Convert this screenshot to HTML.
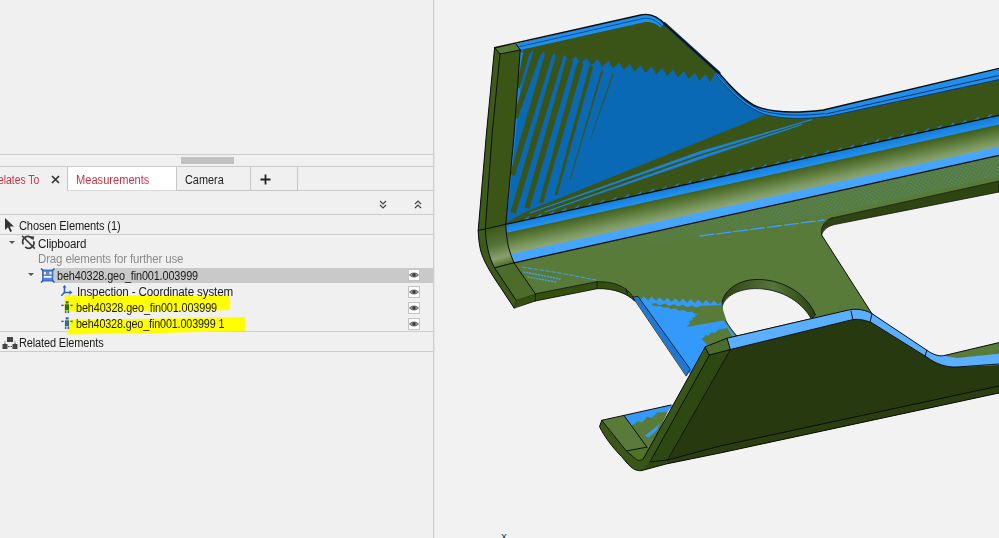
<!DOCTYPE html>
<html>
<head>
<meta charset="utf-8">
<title>Inspection</title>
<style>
html,body{margin:0;padding:0;}
body{width:999px;height:538px;overflow:hidden;background:#f0f0f0;position:relative;font-family:"Liberation Sans",sans-serif;font-size:12px;color:#1a1a1a;}
.abs{position:absolute;}
.hl{position:absolute;left:0;height:1px;background:#cbcbcb;}
.t{position:absolute;white-space:nowrap;line-height:16px;height:16px;font-size:12px;letter-spacing:-0.15px;}
.tab{position:absolute;top:167px;height:24px;line-height:24px;white-space:nowrap;font-size:12px;}
.eye{position:absolute;left:408px;width:10px;height:10px;background:#fff;border:1px solid #c4c4c4;}
.tl{position:absolute;top:1px;display:inline-block;transform-origin:0 50%;}
.eye svg{position:absolute;left:0;top:0;}
.t span{display:inline-block;transform-origin:0 50%;}
.tri{position:absolute;width:0;height:0;border-left:3px solid transparent;border-right:3px solid transparent;border-top:3px solid #555;}
</style>
</head>
<body>
<!-- left panel -->
<div class="abs" id="panel" style="left:0;top:0;width:433px;height:538px;background:#f0f0f0;"></div>
<div class="abs" style="left:433px;top:0;width:1px;height:538px;background:#cecece;"></div><div class="abs" style="left:434px;top:0;width:1px;height:538px;background:#e6e6e6;z-index:2;"></div>
<div class="hl" style="top:154px;width:433px;"></div>
<div class="abs" style="left:181px;top:157px;width:53px;height:7px;background:#c2c2c2;"></div>
<div class="hl" style="top:166px;width:433px;"></div>

<!-- tabs -->
<div class="tab" style="left:0;width:67px;color:#c0394a;"><span class="tl" style="left:-2px;transform:scaleX(0.864)">elates To</span><svg style="position:absolute;left:51px;top:8px;" width="9" height="9" viewBox="0 0 9 9"><path d="M1 1 L8 8 M8 1 L1 8" stroke="#333" stroke-width="1.7" fill="none"/></svg></div>
<div class="tab" style="left:67px;width:109px;background:#fff;border-left:1px solid #c6c6c6;border-bottom:1px solid #d8d8d8;box-sizing:border-box;color:#c0394a;"><span class="tl" style="left:8px;transform:scaleX(0.925)">Measurements</span></div>
<div class="tab" style="left:176px;width:75px;border-left:1px solid #c6c6c6;border-right:1px solid #c6c6c6;border-bottom:1px solid #c6c6c6;box-sizing:border-box;color:#222;"><span class="tl" style="left:8px;transform:scaleX(0.9066)">Camera</span></div>
<div class="tab" style="left:251px;width:47px;border-right:1px solid #c6c6c6;border-bottom:1px solid #c6c6c6;box-sizing:border-box;color:#222;"><svg style="position:absolute;left:9px;top:7px;" width="11" height="11" viewBox="0 0 11 11"><path d="M5.5 0.5 V10.5 M0.5 5.5 H10.5" stroke="#222" stroke-width="1.8" fill="none"/></svg></div>
<div class="hl" style="top:190px;left:298px;width:135px;"></div>

<!-- chevrons -->
<svg class="abs" style="left:377px;top:199px;" width="50" height="12" viewBox="0 0 50 12">
<g fill="none" stroke="#444" stroke-width="1.2">
<path d="M3 2 L6 5 L9 2 M3 6 L6 9 L9 6"/>
<path d="M38 5 L41 2 L44 5 M38 9 L41 6 L44 9"/>
</g>
</svg>
<div class="hl" style="top:214px;width:433px;"></div>

<!-- Chosen elements -->
<svg class="abs" style="left:4px;top:218px;" width="12" height="16" viewBox="0 0 12 16"><path d="M1 0 L1 12 L4 9.3 L6.2 14 L8 13.2 L5.8 8.6 L10 8.4 Z" fill="#333"/></svg>
<div class="t" style="left:19px;top:218px;"><span style="transform:scaleX(0.9238)">Chosen Elements (1)</span></div>
<div class="hl" style="top:234px;width:433px;"></div>

<!-- Clipboard -->
<div class="tri" style="left:9px;top:241px;"></div>
<svg class="abs" style="left:21px;top:235px;" width="15" height="16" viewBox="0 0 15 16">
<g fill="none" stroke="#3a3a3a" stroke-width="1.7" stroke-linecap="butt">
<path d="M2.4 9.4 A5.2 5.2 0 0 1 11.3 3.9"/>
<path d="M12.6 6.2 A5.2 5.2 0 0 1 4.2 11.8"/>
<path d="M1 0.8 L13.8 13.6" stroke-width="1.5"/>
</g>
<path d="M9.2 1.2 L13.2 1.6 L12.4 5.6 Z" fill="#3a3a3a"/>
</svg>
<div class="t" style="left:38px;top:236px;"><span style="transform:scaleX(0.9637)">Clipboard</span></div>
<div class="t" style="left:38px;top:251px;color:#8a8a8a;"><span style="transform:scaleX(0.9576)">Drag elements for further use</span></div>

<!-- highlighted rows -->
<div class="hl" style="top:331px;width:433px;"></div>
<svg class="abs" style="left:55px;top:290px;" width="200" height="50" viewBox="55 290 200 50">
<path d="M64.6,295 L229,295.8 L230.5,303 L229.5,310.2 L64.6,311.6 Z" fill="#ffff00"/>
<path d="M67.4,320 L160,318.5 L245,317 L245.6,324 L245.2,331 L160,333 L67.4,334.4 Z" fill="#ffff00"/>
</svg>
<!-- selected row -->
<div class="abs" style="left:54px;top:268px;width:379px;height:15px;background:#c9c9c9;"></div>
<div class="tri" style="left:28px;top:273px;"></div>
<svg class="abs" style="left:40px;top:268px;" width="15" height="15" viewBox="0 0 15 15">
<rect x="2" y="1.5" width="11.5" height="12" fill="#3f6fc6"/>
<rect x="3.6" y="3.2" width="8.3" height="8.6" fill="#5a86d6"/>
<rect x="3.8" y="3.8" width="2.2" height="2.6" fill="#f4f7fc"/><rect x="9.4" y="3.8" width="2.2" height="2.6" fill="#f4f7fc"/>
<rect x="3.8" y="8" width="7.8" height="1.8" fill="#f4f7fc"/>
<path d="M1 0.5 L3 2.5 M14.5 0.5 L12.5 2.5 M1 14.5 L3 12.5 M14.5 14.5 L12.5 12.5" stroke="#2c55a8" stroke-width="1.5"/>
</svg>
<div class="t" style="left:57px;top:268px;"><span style="transform:scaleX(0.906)">beh40328.geo_fin001.003999</span></div>
<div class="eye" style="top:269px;"><svg width="10" height="10" viewBox="0 0 10 10"><path d="M0.6 5 C2.2 2.4 7.8 2.4 9.4 5 C7.8 7.6 2.2 7.6 0.6 5 Z" fill="#9a9a9a" stroke="#555" stroke-width="0.9"/><circle cx="5" cy="5" r="1.7" fill="#3a3a3a"/></svg></div>

<!-- Inspection row -->
<svg class="abs" style="left:60px;top:284.5px;" width="13" height="12" viewBox="0 0 13 12">
<g fill="none" stroke="#2f5fc0" stroke-width="1.6">
<path d="M4.5 1 L4.5 7.5 L11 7.5"/>
<path d="M4.5 7.5 L1.3 10.7"/>
</g>
<path d="M9.5 5.3 L12.5 7.5 L9.5 9.7 Z" fill="#2f5fc0"/>
<path d="M2.6 2.6 L4.5 0 L6.4 2.6 Z" fill="#2f5fc0"/>
</svg>
<div class="t" style="left:77px;top:284px;"><span style="transform:scaleX(0.97)">Inspection - Coordinate system</span></div>
<div class="eye" style="top:286px;"><svg width="10" height="10" viewBox="0 0 10 10"><path d="M0.6 5 C2.2 2.4 7.8 2.4 9.4 5 C7.8 7.6 2.2 7.6 0.6 5 Z" fill="#9a9a9a" stroke="#555" stroke-width="0.9"/><circle cx="5" cy="5" r="1.7" fill="#3a3a3a"/></svg></div>


<svg class="abs" style="left:60px;top:300px;" width="14" height="14" viewBox="0 0 14 14">
<rect x="5.7" y="1.2" width="2.9" height="2.3" fill="#2f6b1e"/>
<rect x="4.9" y="4.3" width="4.1" height="5.8" fill="#2f6b1e"/>
<rect x="1.3" y="4.7" width="2.4" height="1.4" fill="#2f5fc0"/><rect x="10.3" y="4.7" width="2.4" height="1.4" fill="#2f5fc0"/>
<rect x="4.9" y="10.5" width="1.5" height="2.6" fill="#2f5fc0"/><rect x="7.6" y="10.5" width="1.5" height="2.6" fill="#2f5fc0"/>
</svg>
<div class="t" style="left:76px;top:300px;"><span style="transform:scaleX(0.906)">beh40328.geo_fin001.003999</span></div>
<div class="eye" style="top:302px;"><svg width="10" height="10" viewBox="0 0 10 10"><path d="M0.6 5 C2.2 2.4 7.8 2.4 9.4 5 C7.8 7.6 2.2 7.6 0.6 5 Z" fill="#9a9a9a" stroke="#555" stroke-width="0.9"/><circle cx="5" cy="5" r="1.7" fill="#3a3a3a"/></svg></div>
<svg class="abs" style="left:60px;top:316px;" width="14" height="14" viewBox="0 0 14 14">
<rect x="5.7" y="1.2" width="2.9" height="2.3" fill="#2f5fc0"/>
<rect x="4.9" y="4.3" width="4.1" height="5.8" fill="#356a8a"/>
<rect x="1.3" y="4.7" width="2.4" height="1.4" fill="#2f5fc0"/><rect x="10.3" y="4.7" width="2.4" height="1.4" fill="#2f5fc0"/>
<rect x="4.9" y="10.5" width="1.5" height="2.6" fill="#2f5fc0"/><rect x="7.6" y="10.5" width="1.5" height="2.6" fill="#2f5fc0"/>
</svg>
<div class="t" style="left:76px;top:316px;"><span style="transform:scaleX(0.897)">beh40328.geo_fin001.003999 1</span></div>
<div class="eye" style="top:318px;"><svg width="10" height="10" viewBox="0 0 10 10"><path d="M0.6 5 C2.2 2.4 7.8 2.4 9.4 5 C7.8 7.6 2.2 7.6 0.6 5 Z" fill="#9a9a9a" stroke="#555" stroke-width="0.9"/><circle cx="5" cy="5" r="1.7" fill="#3a3a3a"/></svg></div>


<!-- Related elements -->
<svg class="abs" style="left:1.5px;top:335.5px;" width="16" height="14" viewBox="0 0 16 14">
<rect x="5" y="1" width="6" height="5" fill="#444"/>
<rect x="0.5" y="8" width="5" height="5" fill="#444"/>
<rect x="10.5" y="8" width="5" height="5" fill="#444"/>
<path d="M3 8 L3 5 M13 8 L13 5 M6 10.5 L10 10.5" stroke="#444" stroke-width="1" stroke-dasharray="1.5 1"/>
</svg>
<div class="t" style="left:19px;top:335px;"><span style="transform:scaleX(0.916)">Related Elements</span></div>
<div class="hl" style="top:351px;width:433px;"></div>

<!-- viewport -->
<div class="abs" style="left:434px;top:0;width:565px;height:538px;background:#f2f2f2;"></div>
<div class="abs" style="left:501px;top:533px;font-size:9px;line-height:9px;color:#222;">X</div>
<svg id="model" class="abs" style="left:434px;top:0;" width="565" height="538" viewBox="434 0 565 538">
<defs>
<linearGradient id="gBend" gradientUnits="userSpaceOnUse" x1="752" y1="169.9" x2="760.4" y2="208.5">
<stop offset="0" stop-color="#3e5a1c"/>
<stop offset="0.24" stop-color="#44621f"/>
<stop offset="0.45" stop-color="#5f7e3f"/>
<stop offset="0.62" stop-color="#7a9660"/>
<stop offset="0.76" stop-color="#8aa472"/>
<stop offset="1" stop-color="#7f9c64"/>
</linearGradient>
<linearGradient id="gB1" gradientUnits="userSpaceOnUse" x1="752" y1="169.9" x2="754.2" y2="180">
<stop offset="0" stop-color="#0f7fda"/>
<stop offset="1" stop-color="#2a93f4"/>
</linearGradient>
<clipPath id="cBend"><path d="M505.8,224.3 L999,115.4 L999,155.3 L514,262.8 C512,258 510,253 508.5,247 C507,240 506,233 505.8,224.3 Z"/></clipPath>
<pattern id="pDots" width="4.2" height="4.2" patternUnits="userSpaceOnUse" patternTransform="rotate(-12.5)">
<rect x="0.5" y="0.5" width="1.5" height="1.1" fill="#4aa3f5"/>
<rect x="2.6" y="2.6" width="1.5" height="1.1" fill="#4aa3f5"/>
</pattern>
<linearGradient id="gFade" gradientUnits="userSpaceOnUse" x1="560" y1="0" x2="999" y2="0">
<stop offset="0" stop-color="#fff" stop-opacity="0"/>
<stop offset="0.5" stop-color="#fff" stop-opacity="0.7"/>
<stop offset="1" stop-color="#fff" stop-opacity="1"/>
</linearGradient>
<mask id="mFade"><rect x="434" y="0" width="565" height="538" fill="url(#gFade)"/></mask>
<linearGradient id="gFlange" gradientUnits="userSpaceOnUse" x1="492" y1="227" x2="503" y2="266">
<stop offset="0" stop-color="#3c5818"/>
<stop offset="0.45" stop-color="#54743a"/>
<stop offset="0.78" stop-color="#8aa06e"/>
<stop offset="1" stop-color="#4c6d29"/>
</linearGradient>
<linearGradient id="gHole" gradientUnits="userSpaceOnUse" x1="722" y1="300" x2="815" y2="300">
<stop offset="0" stop-color="#2c4210"/>
<stop offset="0.55" stop-color="#55753a"/>
<stop offset="1" stop-color="#2c4210"/>
</linearGradient>
</defs>
<g stroke-linejoin="round" stroke-linecap="round">
<!-- main top face -->
<path d="M516,44 L640.7,15 C646,13.8 652,14.8 656,17.2 C660,19.5 662,21 664.5,23.8 L719,73 C730,86 741,98 753,104.8 C767,112 790,114 823.4,110 L999,68.4 L999,116 L505.8,224.3 L514,135 Z" fill="#3a5417"/>
<!-- blue area -->
<path d="M521,50 L522.0,48.7 L526.5,56.5 L532.8,50.2 L537.3,58.0 L543.6,51.7 L548.1,59.5 L554.4,53.2 L558.9,61.0 L565.2,54.7 L569.7,62.5 L576.0,56.2 L580.5,64.0 L586.8,57.7 L591.3,65.5 L597.6,59.2 L602.1,67.0 L608.4,60.7 L612.9,68.5 L619.2,62.2 L623.7,70.0 L630.0,63.7 L634.5,71.5 L640.8,65.2 L645.3,73.0 L651.6,66.6 L656.1,74.4 L662.4,68.1 L666.9,75.9 L673.2,69.6 L677.7,77.4 L684.0,71.1 L688.5,78.9 L694.8,72.6 L699.3,80.4 L705.6,74.1 L710.1,81.9 L716,72 L722,76 C733,89 744,99 755,105 L766,112 L765,115 L526,211.7 L506,222.5 L514,135 Z" fill="#0a69b4"/>
<path d="M520,52 L524,53 L509,200 L506,222 L514,135 Z" fill="#1b83e0"/>
<g fill="#3a5417">
<path d="M523.6,50.2 L530.0,51.8 L519.5,88.3 L516.5,87.7 Z"/>
<path d="M533.4,51.3 L540.6,53.7 L517.6,118.7 L513.4,117.3 Z"/>
<path d="M544.9,53.9 L552.1,56.1 L514.9,175.7 L510.1,174.3 Z"/>
<path d="M555.8,55.9 L563.0,58.1 L515.6,213.8 L510.4,212.2 Z"/>
<path d="M566.3,59.0 L573.1,61.0 L529.4,208.7 L524.6,207.3 Z"/>
<path d="M577.6,62.2 L583.4,63.8 L542.9,203.5 L539.1,202.5 Z"/>
<path d="M589.5,65.5 L593.3,66.5 L557.2,195.3 L554.8,194.7 Z"/>
<path d="M601.4,69.7 L603.2,70.3 L570.5,180.1 L569.5,179.9 Z"/>
<path d="M612.4,73.8 L613.6,74.2 L590.3,140.1 L589.7,139.9 Z"/>
</g>
<path d="M530,213 L700,151.6 L812,119.5 L700,154 Z M545,212 L700,156.6 L802,124.5 L700,159 Z" fill="#1b83e0" stroke="#1b83e0" stroke-width="0.8"/>
<path d="M522.0,220.7 L528.0,219.4 L529.5,215.9 Z M534.5,218.0 L540.5,216.6 L542.0,213.1 Z M547.0,215.2 L553.0,213.9 L554.5,210.3 Z M559.5,212.4 L565.5,211.1 L567.0,207.6 Z M572.0,209.7 L578.0,208.4 L579.5,204.8 Z M584.5,206.9 L590.5,205.6 L592.0,202.1 Z M597.0,204.2 L603.0,202.8 L604.5,199.3 Z M609.5,201.4 L615.5,200.1 L617.0,196.5 Z M622.0,198.6 L628.0,197.3 L629.5,193.8 Z M634.5,195.9 L640.5,194.6 L642.0,191.0 Z M647.0,193.1 L653.0,191.8 L654.5,188.3 Z M659.5,190.4 L665.5,189.0 L667.0,185.5 Z M672.0,187.6 L678.0,186.3 L679.5,182.7 Z M684.5,184.8 L690.5,183.5 L692.0,180.0 Z M697.0,182.1 L703.0,180.8 L704.5,177.2 Z M709.5,179.3 L715.5,178.0 L717.0,174.5 Z M722.0,176.6 L728.0,175.2 L729.5,171.7 Z M734.5,173.8 L740.5,172.5 L742.0,168.9 Z M747.0,171.0 L753.0,169.7 L754.5,166.2 Z M759.5,168.3 L765.5,167.0 L767.0,163.4 Z M772.0,165.5 L778.0,164.2 L779.5,160.7 Z M784.5,162.8 L790.5,161.4 L792.0,157.9 Z M797.0,160.0 L803.0,158.7 L804.5,155.1 Z M809.5,157.2 L815.5,155.9 L817.0,152.4 Z M822.0,154.5 L828.0,153.2 L829.5,149.6 Z M834.5,151.7 L840.5,150.4 L842.0,146.9 Z M847.0,149.0 L853.0,147.6 L854.5,144.1 Z M859.5,146.2 L865.5,144.9 L867.0,141.3 Z M872.0,143.4 L878.0,142.1 L879.5,138.6 Z M884.5,140.7 L890.5,139.4 L892.0,135.8 Z M897.0,137.9 L903.0,136.6 L904.5,133.1 Z M909.5,135.2 L915.5,133.8 L917.0,130.3 Z M922.0,132.4 L928.0,131.1 L929.5,127.5 Z M934.5,129.6 L940.5,128.3 L942.0,124.8 Z M947.0,126.9 L953.0,125.6 L954.5,122.0 Z M959.5,124.1 L965.5,122.8 L967.0,119.3 Z M972.0,121.4 L978.0,120.0 L979.5,116.5 Z M984.5,118.6 L990.5,117.3 L992.0,113.7 Z" fill="#1b83e0"/>
<!-- top edge blue strip -->
<path d="M516.4,43.9 L640.7,15 C646,13.8 652,14.8 656,17.2 C660,19.5 662,21 664.5,23.8 L660.5,27.5 C657,24 652,21.5 645,22 L520.2,50 Z" fill="#1e8ff0"/>
<path d="M518,47 L643,18.5 C650,17.5 656,20 662,26" stroke="#0c4f8c" stroke-width="1" fill="none"/>
<path d="M664.5,23.8 L719,73" stroke="#123a5e" stroke-width="3.2" fill="none"/>
<path d="M719,73 C730,86 741,98 753,104.8 C767,112 790,114 823.4,110 L826,116.5 C805,119.5 780,119 765,114.5 C750,109 735,98 716.5,75.5 Z" fill="#1e8ff0"/>
<path d="M716.5,75.5 C735,98 750,109 765,114.5 C780,119 805,119.5 826,116.5 M718,74.5 C735,95 750,106 763,111 C780,116 805,116 825,113.5" stroke="#0c3560" stroke-width="0.9" fill="none"/>
<path d="M823.4,110 L999,68.4 L999,79.6 L826,117 Z" fill="#1e8ff0"/>
<path d="M826,114 L999,75.5" stroke="#0c3560" stroke-width="1" fill="none"/>
<path d="M826,117 L999,79.6" stroke="#0c3560" stroke-width="1" fill="none"/>
<!-- bend band -->
<g clip-path="url(#cBend)">
<path d="M500,226 L999,115.4 L999,158 L500,266 Z" fill="url(#gBend)"/>
<path d="M500,225.6 L999,115.4 L999,124.6 L500,234.2 Z" fill="url(#gB1)"/>
<path d="M500,256.4 L999,146.8 L999,158 L500,266.5 Z" fill="#46a6ff"/>
</g>
<!-- flat face -->
<path d="M514,262.8 L999,155.3 L999,181 L832,218 C826,219.5 820,226 821.6,235 L872,313.8 L850,330 L707,345 L689,367 L633,297 C628,288 615,281 597,281.7 L535.4,293.8 Z" fill="#587b39"/>
<path d="M560,253 L999,156 L999,176 L836,213 L700,236 L600,254 Z" fill="url(#pDots)" mask="url(#mFade)" opacity="0.5"/>
<path d="M522,267 L560,273 L596,280" stroke="#3d9eff" stroke-width="1" stroke-dasharray="4 2" fill="none"/>
<path d="M524,272 L560,279 M528,277 L556,282" stroke="#4aa3f5" stroke-width="1.6" stroke-dasharray="1 2" fill="none" opacity="0.8"/>
<path d="M700,236 L824,220" stroke="#3d9eff" stroke-width="1.3" stroke-dasharray="14 3" fill="none"/>
<!-- cutout thickness -->
<path d="M832,218 L999,181 L999,192 L834.3,224.6 C828,226 823,230 821.6,235 C820,226 826,219.5 832,218 Z" fill="#2e4511" stroke="#111" stroke-width="0.8"/>
<!-- hole -->
<path d="M721.5,306 C722,292 736,280.5 755,279.5 C780,278.5 806,292 815.5,315 L811.3,318.8 L737,336 Z" fill="url(#gHole)" stroke="#111" stroke-width="0.9"/>
<path d="M722,309 C722,298 736,289 755.3,288.6 C778,288.5 800,299 811.3,318.8 L737,336 C729,327 723,318 722,309 Z" fill="#f2f2f2" stroke="#111" stroke-width="0.8"/>
<!-- blue region left of hole -->
<path d="M635.6,296.4 L636.0,295.8 L640.7,299.9 L643.8,296.3 L648.4,300.4 L651.5,296.7 L656.2,300.8 L659.3,297.2 L664.0,301.3 L667.1,297.7 L671.8,301.8 L674.9,298.2 L679.5,302.2 L682.6,298.6 L687.3,302.7 L690.4,299.1 L695.1,303.2 L698.2,299.6 L702.8,303.7 L706.0,300.1 L710.6,304.1 L713.7,300.5 L718.4,304.6 L721.5,301.6 L722,309 C722,315 723,318 724,321 L735,336 L725,352 L700,385 L690.3,374.5 Z" fill="#3399fa"/>
<path d="M650.7,303.9 L656,303 L660,305.4 L665,303.6 L669,306 L674,304.2 L678,306.6 L683,304.8 L687,307.2 L692,305.4 L696,307.6 L701.8,305.8 L722.2,305 L723.3,310.7 L726.3,319.9 L686.5,327 L690,323.5 L688.5,322 L693,319.5 L691.5,318 L696,316.5 L694.5,315 L699,314.2 L694,313.6 L692,311.6 L687,312.2 L684,310 L679,310.8 L676,308.6 L671,309.2 L668,307.2 L663,307.8 L660,306 L655,306.3 Z" fill="#587b39"/>
<path d="M701.8,339.3 L706,335 L708,336 L712,332 L714.5,333 L719,329.5 L727.4,328 L733,338 L708,345.4 Z" fill="#587b39"/>
<path d="M633,297 L638,296.4 L690.3,369.3 L686.4,375.8 Z" fill="#1c7ad6" stroke="#111" stroke-width="0.8"/>
<!-- foot front thickness -->
<path d="M514,307.8 L516,300 L535.4,293.8 L597,281.7 C615,281 628,288 633,297 L634.6,301 C628,294 614,288 597,288.7 L535.4,301 Z" fill="#34500f" stroke="#111" stroke-width="0.9"/>
<path d="M535.4,293.8 L535.4,301 M597,281.7 L597,288.7 M626,288.5 L627.5,294" stroke="#111" stroke-width="0.8" fill="none"/>
<!-- left flange -->
<path d="M494.6,47.7 L516,44 L520.2,50 L514,135 L505.8,224.3 C506,233 507,240 508.5,247 C510,253 512,258 514,262.8 L535.4,293.8 L516,300 L514,307.8 L500.7,287.7 C490,272 483,260 480.5,250 C479,243 478.5,238 478.2,230.4 L486.3,135 L494.6,47.7 Z" fill="#3a5516"/>
<path d="M485.3,229 L505.8,224.3 C506,233 507,240 508.5,247 C510,253 512,258 514,262.8 L494.5,267.9 C492,263 490,258 488,250 C486.5,243 485.6,237 485.3,229 Z" fill="url(#gFlange)"/>
<path d="M494.6,47.7 L516,44 L520.2,50 L500,54 Z" fill="#557a36"/>
<path d="M494.5,267.9 L514,262.8 L535.4,293.8 L516,300 Z" fill="#4c6d29"/>
<path d="M494.6,47.7 L500,54 L492,135 L485.3,229 C485.6,237 486.5,243 488,250 C490,258 492,263 494.5,267.9 L516,300 L514,307.8 L500.7,287.7 C490,272 483,260 480.5,250 C479,243 478.5,238 478.2,230.4 L486.3,135 L494.6,47.7 Z" fill="#3d5a1a"/>
<!-- lower flange -->
<path d="M730.4,349.5 L851.6,319.9 C858,318.5 864,320 870.8,322.2 L926.7,357 C936,364 946,367.5 957,367 L999,364 L999,393 L720,453 L666,464 L667.5,460 Z" fill="#27390f"/>
<path d="M667.5,460 L720,446 L999,386 L999,393 L720,453 L666,464 Z" fill="#2a3e10"/>
<path d="M727,338.2 L850.3,309.6 C858,308.5 866,310 872.2,313.8 L926.7,350.1 C932,354 938,356.5 943.5,355.7 L999,353.7 L999,365 L957,367 C946,367.5 936,364 926.7,357 L870.8,322.2 C864,320 858,318.5 851.6,319.9 L730.4,349.5 Z" fill="#5aafff"/>
<path d="M943.5,355.7 L999,342.6 L999,353.7 L957,358 Z" fill="#587b39"/>
<!-- lower foot -->
<path d="M601.8,420.3 L671,405 L652,446 L626.3,451 Z" fill="#587b39"/>
<path d="M624,415.5 L674,404.5 L667,412 L657,412.5 L652,418 L647,417 L642,422.5 L638,421 L631,426 Z" fill="#3399fa"/>
<path d="M644.5,436 L660.3,423.4 L657,430 L648.5,437.5 Z" fill="#3399fa"/>
<path d="M626.3,451 L652,446 L646,459 C641,461 638,461 635.8,459 Z" fill="#4f7424"/>
<path d="M601.8,420.3 L599.5,426.6 C604,436 612,447 621.6,456.6 C626,462 630,467 634.2,469.3 C637,470.5 640,471 642,470.5 L650,462 L643.7,458.2 C641,461 638,461 635.8,459 L626.3,451 Z" fill="#3b5717"/>
<!-- flange end strips -->
<path d="M705.3,346.8 L727.6,341.2 L730.4,349.5 L667.5,460 L666,464 L642,470.5 L643.7,458.2 Z" fill="#2e4811"/>
<path d="M705.3,346.8 L709.4,355 L650.5,461 L642,470.5 C640,471 637,470.5 634.2,469.3 L643.7,458.2 Z" fill="#38551a"/>
<path d="M705.3,346.8 L727,338.2 L730.4,349.5 L709.4,355 Z" fill="#4c6d29"/>
<!-- outlines -->
<g fill="none" stroke="#0d0d0d" stroke-width="1">
<path d="M494.6,47.7 L640.7,15 C646,13.8 652,14.8 656,17.2 C660,19.5 662,21 664.5,23.8 L719,73 C730,86 741,98 753,104.8 C767,112 790,114 823.4,110 L999,68.4" stroke-width="1.4"/>
<path d="M494.6,47.7 L486.3,135 L478.2,230.4 C478.5,238 479,243 480.5,250 C483,260 490,272 500.7,287.7 L514,307.8"/>
<path d="M500,54 L492,135 L485.3,229 C485.6,237 486.5,243 488,250 C490,258 492,263 494.5,267.9 L516,300"/>
<path d="M520.2,50 L514,135 L505.8,224.3 C506,233 507,240 508.5,247 C510,253 512,258 514,262.8 L535.4,293.8"/>
<path d="M494.6,47.7 L500,54 L520.2,50 M516,44 L520.2,50"/>
<path d="M478.2,230.4 L485.3,229 L505.8,224.3 M494.5,267.9 L514,262.8"/>
<path d="M505.8,224.3 L999,115.4" stroke-width="1.3"/>
<path d="M514,262.8 L999,155.3" stroke-width="1.3"/>
<path d="M821.6,235 L872,313.8"/>
<path d="M727,338.2 L850.3,309.6 C858,308.5 866,310 872.2,313.8 L926.7,350.1 C932,354 938,356.5 943.5,355.7 L999,342.6"/>
<path d="M730.4,349.5 L851.6,319.9 C858,318.5 864,320 870.8,322.2 L926.7,357 C936,364 946,367.5 957,367 L999,364"/>
<path d="M705.3,346.8 L727,338.2 L730.4,349.5 L709.4,355 Z"/>
<path d="M705.3,346.8 L643.7,458.2 M709.4,355 L650.5,461 M730.4,349.5 L667.5,460"/>
<path d="M667.5,460 L720,446 L999,386"/>
<path d="M601.8,420.3 L671,405 M601.8,420.3 L599.5,426.6 C604,436 612,447 621.6,456.6 C626,462 630,467 634.2,469.3 C637,470.5 640,471 642,470.5 L666,464 L720,453 L999,393"/>
<path d="M601.8,420.3 L626.3,451 L635.8,459 C638,461 641,461 643.7,458.2 M626.3,451 L646.9,447.1 M624,415.5 L646.9,447.1 M650,462 L667.5,460"/>
<path d="M851,311 L853,320 M872,314 L870,322 M926.7,350.1 L925,357"/>
</g>
</g>
</svg>
</body>
</html>
